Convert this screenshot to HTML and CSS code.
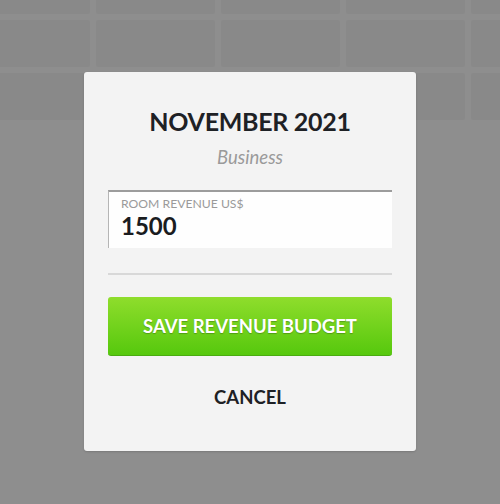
FILE: index.html
```html
<!DOCTYPE html>
<html>
<head>
<meta charset="utf-8">
<link rel="stylesheet" href="styles.css">
</head>
<body>
<div class="board">
  <div class="calendar">
    <div class="tile"></div><div class="tile"></div><div class="tile"></div><div class="tile"></div><div class="tile"></div>
    <div class="tile"></div><div class="tile"></div><div class="tile"></div><div class="tile"></div><div class="tile"></div>
    <div class="tile"></div><div class="tile"></div><div class="tile"></div><div class="tile"></div><div class="tile"></div>
  </div>
</div>
<div class="modal">
  <h1 class="title">NOVEMBER 2021</h1>
  <div class="subtitle">Business</div>
  <div class="field">
    <div class="field-label">ROOM REVENUE US$</div>
    <div class="field-value">1500</div>
  </div>
  <div class="divider"></div>
  <button class="save">SAVE REVENUE BUDGET</button>
  <button class="cancel">CANCEL</button>
</div>
</body>
</html>
```
FILE: styles.css
```css
html, body {
  margin: 0;
  padding: 0;
}
body {
  width: 500px;
  height: 504px;
  background: #8e8e8e;
  overflow: hidden;
  position: relative;
  font-family: Lato, "Open Sans", sans-serif;
}
.board {
  width: 500px;
  height: 122px;
  overflow: hidden;
}
.calendar {
  display: grid;
  grid-template-columns: repeat(5, 119px);
  grid-auto-rows: 47px;
  gap: 6px;
  margin-left: -29px;
  margin-top: -33px;
}
.tile {
  background: #898989;
  border-radius: 2px;
}
.modal {
  position: absolute;
  left: 84px;
  top: 72px;
  width: 332px;
  height: 379px;
  box-sizing: border-box;
  padding: 34px 24px 0;
  background: #f3f3f3;
  border-radius: 3px;
  box-shadow: 0 1px 2px rgba(0,0,0,0.15);
  display: flex;
  flex-direction: column;
  align-items: stretch;
}
.title {
  margin: 0;
  text-align: center;
  font-size: 25px;
  font-weight: 700;
  color: #1e2125;
  line-height: 30px;
  letter-spacing: -0.3px;
}
.subtitle {
  margin-top: 10px;
  text-align: center;
  font-style: italic;
  font-size: 18.5px;
  color: #9a9a9a;
  line-height: 22px;
}
.field {
  margin-top: 22px;
  height: 58px;
  box-sizing: border-box;
  background: #fefefe;
  border-top: 2px solid #9c9c9c;
  border-left: 1px solid #b5b5b5;
  padding: 5px 12px 0;
}
.field-label {
  font-size: 12.2px;
  color: #9a9a9a;
  line-height: 14px;
}
.field-value {
  font-size: 24px;
  font-weight: 700;
  color: #1a1c1f;
  line-height: 28px;
  margin-top: 1px;
}
.divider {
  margin-top: 25px;
  height: 2px;
  background: #d8d8d8;
}
.save {
  margin-top: 22px;
  height: 59px;
  border: none;
  border-bottom: 1px solid #4aab10;
  border-radius: 3px;
  background: linear-gradient(#8fdd2c, #56c80d);
  color: #fff;
  font-family: inherit;
  font-size: 18.5px;
  font-weight: 700;
  letter-spacing: 0;
  text-shadow: 0 1px 1px rgba(0,0,0,0.25);
  padding: 0;
}
.cancel {
  margin-top: 22px;
  height: 38px;
  border: none;
  background: transparent;
  color: #1e2125;
  font-family: inherit;
  font-size: 18.5px;
  font-weight: 700;
  letter-spacing: 0;
  padding: 0;
}
```
